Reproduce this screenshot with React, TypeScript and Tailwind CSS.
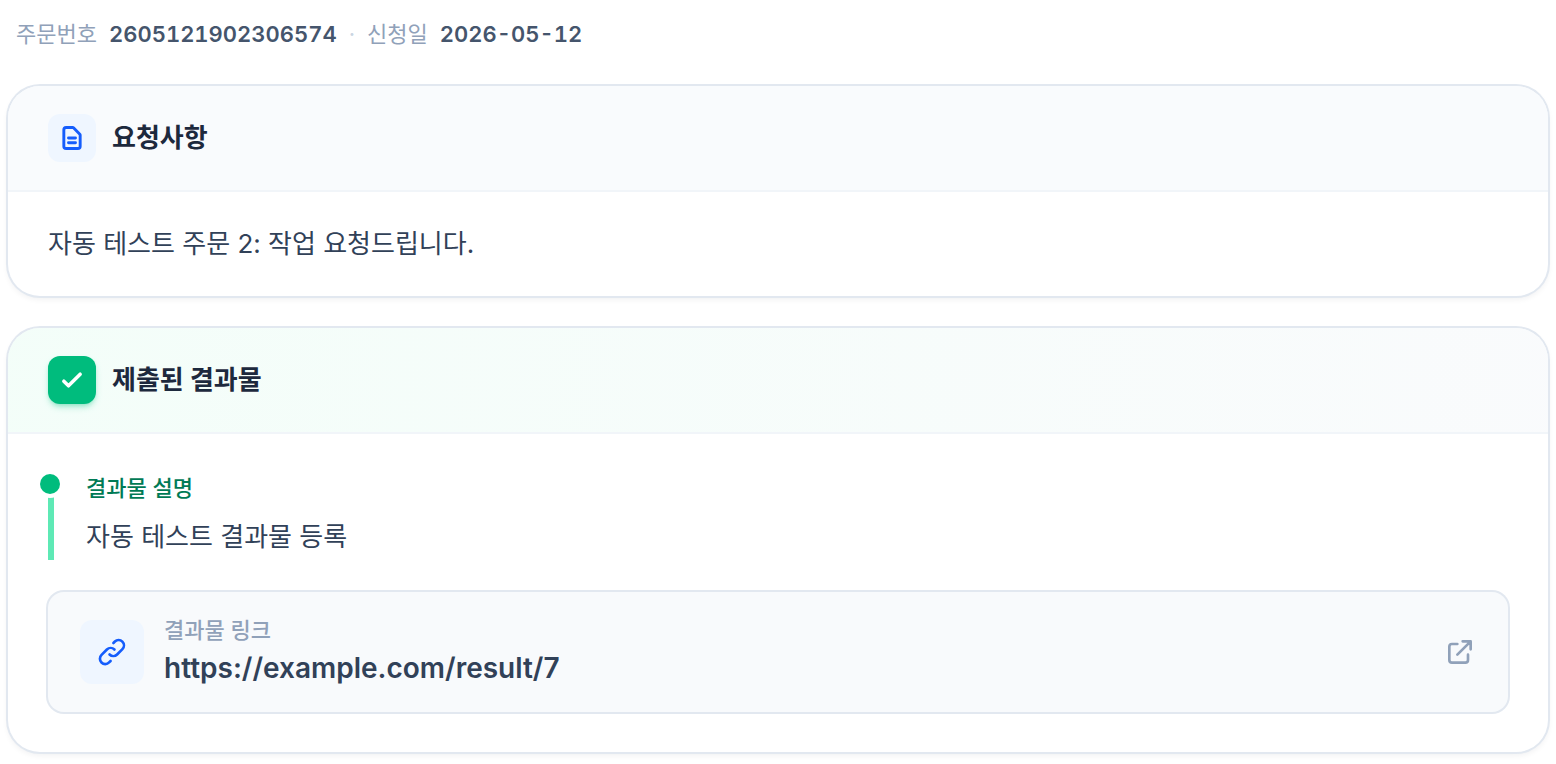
import React from "react";

const iconProps = {
  fill: "none",
  stroke: "currentColor",
  viewBox: "0 0 24 24",
  strokeLinecap: "round",
  strokeLinejoin: "round",
  "aria-hidden": true,
} as const;

function OrderMeta() {
  return (
    <div className="flex flex-wrap items-center gap-3 px-2 text-[22px] leading-9 text-slate-400">
      <p className="flex gap-3">
        <span>주문번호</span>
        <span className="font-semibold text-slate-600 tabular-nums">2605121902306574</span>
      </p>
      <span className="text-slate-300">·</span>
      <p className="flex gap-3">
        <span>신청일</span>
        <span className="font-semibold text-slate-600 tabular-nums">2026-05-12</span>
      </p>
    </div>
  );
}

function RequestCard() {
  return (
    <section className="overflow-hidden rounded-[32px] bg-white shadow-[0_3px_6px_rgb(15_23_42/0.07)] ring-2 ring-slate-200">
      <div className="flex items-center gap-4 border-b-2 border-slate-100 bg-slate-50/80 px-10 py-7">
        <span className="flex size-12 items-center justify-center rounded-xl bg-blue-50 text-blue-600">
          <svg {...iconProps} className="size-7" strokeWidth={2.5}>
            <path d="M9 12h6m-6 4h6m2 5H7a2 2 0 01-2-2V5a2 2 0 012-2h5.586a1 1 0 01.707.293l5.414 5.414a1 1 0 01.293.707V19a2 2 0 01-2 2z" />
          </svg>
        </span>
        <h2 className="text-[26px] leading-10 font-bold text-slate-800">요청사항</h2>
      </div>
      <div className="px-10 py-8">
        <p className="text-[26px] leading-10 text-slate-700">
          자동 테스트 주문 2: 작업 요청드립니다.
        </p>
      </div>
    </section>
  );
}

function ResultCard() {
  return (
    <section className="overflow-hidden rounded-[32px] bg-white shadow-[0_3px_6px_rgb(15_23_42/0.07)] ring-2 ring-slate-200">
      <div className="flex items-center gap-4 border-b-2 border-slate-100 bg-linear-to-r from-emerald-50/60 to-slate-50/80 px-10 py-7">
        <span className="flex size-12 items-center justify-center rounded-xl bg-emerald-500 text-white shadow-md shadow-emerald-500/30">
          <svg {...iconProps} className="size-7" strokeWidth={3}>
            <path d="M5 13l4 4L19 7" />
          </svg>
        </span>
        <h2 className="text-[26px] leading-10 font-bold text-slate-800">제출된 결과물</h2>
      </div>
      <div className="flex flex-col gap-8 p-10">
        <div className="relative border-l-6 border-emerald-300 pl-8">
          <span className="absolute top-0 -left-3.5 size-5 rounded-full bg-emerald-500 ring-4 ring-white" />
          <p className="text-[22px] leading-7 font-medium text-emerald-700">결과물 설명</p>
          <p className="mt-3 text-[26px] leading-[46px] text-slate-700">
            자동 테스트 결과물 등록
          </p>
        </div>
        <a
          href="https://example.com/result/7"
          className="flex items-center gap-5 rounded-2xl bg-slate-50 px-8 py-7 ring-2 ring-slate-200"
        >
          <span className="flex size-16 shrink-0 items-center justify-center rounded-xl bg-blue-50 text-blue-600">
            <svg {...iconProps} className="size-8" strokeWidth={2}>
              <path d="M13.828 10.172a4 4 0 00-5.656 0l-4 4a4 4 0 105.656 5.656l1.102-1.101m-.758-4.899a4 4 0 005.656 0l4-4a4 4 0 00-5.656-5.656l-1.1 1.1" />
            </svg>
          </span>
          <span className="flex min-w-0 flex-1 flex-col">
            <span className="text-[22px] leading-5 font-medium text-slate-400">결과물 링크</span>
            <span className="mt-3 truncate text-[28px] leading-8 font-semibold text-slate-700">
              https://example.com/result/7
            </span>
          </span>
          <svg {...iconProps} className="size-8 shrink-0 text-slate-400" strokeWidth={2}>
            <path d="M10 6H6a2 2 0 00-2 2v10a2 2 0 002 2h10a2 2 0 002-2v-4M14 4h6m0 0v6m0-6L10 14" />
          </svg>
        </a>
      </div>
    </section>
  );
}

export default function App() {
  return (
    <main
      lang="ko"
      className="min-h-screen bg-white px-2 pt-4 pb-3 font-['Inter','Noto_Sans_CJK_KR',sans-serif]"
    >
      <OrderMeta />
      <div className="mt-[34px] flex flex-col gap-8">
        <RequestCard />
        <ResultCard />
      </div>
    </main>
  );
}
